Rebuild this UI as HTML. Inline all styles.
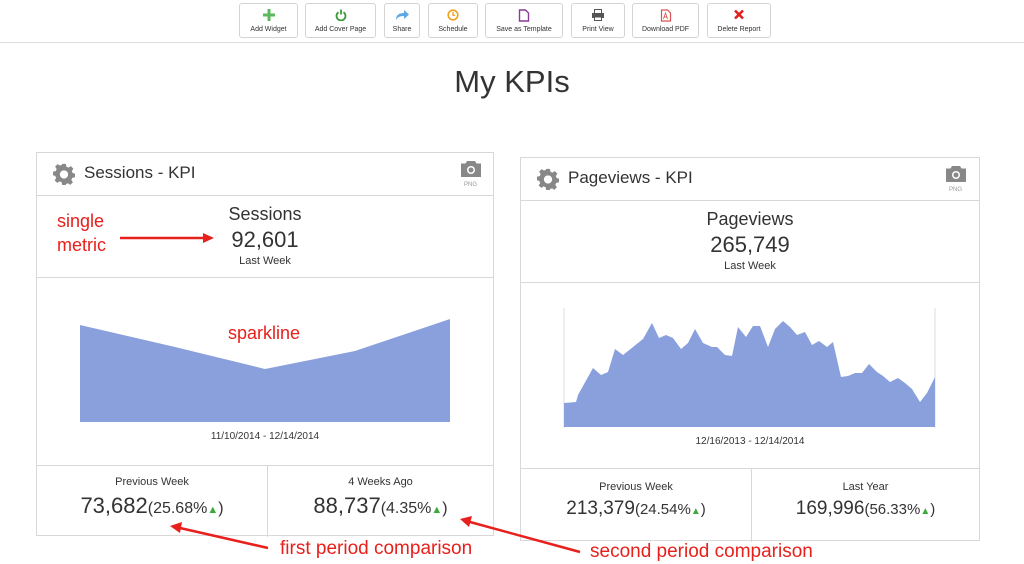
<!DOCTYPE html><html><head><meta charset="utf-8"><style>
*{margin:0;padding:0;box-sizing:border-box}
body{width:1024px;height:564px;background:#fff;font-family:"Liberation Sans",sans-serif;color:#333;position:relative;overflow:hidden}
.a{position:absolute}
.btn{position:absolute;top:3px;height:35px;border:1px solid #d4d4d4;border-radius:3px;background:#fff;font-size:7px;text-align:center;color:#333}
.btn span{position:absolute;left:0;right:0;top:22px}
.btn svg{position:absolute;left:50%;top:5px;transform:translateX(-50%)}
.card{position:absolute;border:1px solid #d8d8d8;background:#fff}
.hl{position:absolute;left:0;right:0;height:1px;background:#d8d8d8}
.c{text-align:center;position:absolute;left:0;right:0}
.red{color:#e8201c;font-size:18px}
</style></head><body>
<div class="a" style="left:0;right:0;top:42px;height:1px;background:#ddd"></div>
<div class="btn" style="left:239px;width:59px"><svg width="12" height="12" viewBox="0 0 12 12"><path d="M6 0v12M0 6h12" stroke="#5cb85c" stroke-width="3"/></svg><span>Add Widget</span></div>
<div class="btn" style="left:305px;width:71px"><svg width="12" height="12" viewBox="0 0 12 12"><path d="M3.5 3.2A4.5 4.5 0 1 0 8.5 3.2M6 0.5v5" stroke="#3a9a3a" stroke-width="1.8" fill="none"/></svg><span>Add Cover Page</span></div>
<div class="btn" style="left:384px;width:36px"><svg width="14" height="12" viewBox="0 0 14 12"><path d="M1 11C1 6 4 4 9 4V1l5 4.5-5 4.5V7C5 7 2.5 8 1 11z" fill="#5aa8e6"/></svg><span>Share</span></div>
<div class="btn" style="left:428px;width:50px"><svg width="12" height="12" viewBox="0 0 12 12"><circle cx="6" cy="6" r="4.8" stroke="#f0a020" stroke-width="1.6" fill="none"/><path d="M6 3v3.2h2" stroke="#f0a020" stroke-width="1.3" fill="none"/></svg><span>Schedule</span></div>
<div class="btn" style="left:485px;width:78px"><svg width="11" height="13" viewBox="0 0 11 13"><path d="M1 1h6l3 3v8H1z" stroke="#8a3a9a" stroke-width="1.4" fill="none"/></svg><span>Save as Template</span></div>
<div class="btn" style="left:571px;width:54px"><svg width="13" height="12" viewBox="0 0 13 12"><rect x="3" y="0.5" width="7" height="4" fill="none" stroke="#555"/><rect x="0.5" y="4" width="12" height="5" fill="#555"/><rect x="3" y="8" width="7" height="3.5" fill="#fff" stroke="#555"/></svg><span>Print View</span></div>
<div class="btn" style="left:632px;width:67px"><svg width="11" height="13" viewBox="0 0 11 13"><path d="M1 1h6l3 3v8H1z" stroke="#d9534f" stroke-width="1.2" fill="none"/><path d="M3 10l2-6 2 6M3 8h4" stroke="#d9534f" stroke-width=".8" fill="none"/></svg><span>Download PDF</span></div>
<div class="btn" style="left:707px;width:64px"><svg width="11" height="11" viewBox="0 0 11 11"><path d="M1.5 1.5l8 8M9.5 1.5l-8 8" stroke="#e02020" stroke-width="2.6"/></svg><span>Delete Report</span></div>

<div class="a" style="left:0;right:0;top:64px;text-align:center;font-size:31px;color:#333">My KPIs</div>

<!-- left card -->
<div class="card" style="left:36px;top:152px;width:458px;height:384px">
 <svg class="a" style="left:16px;top:10px" width="22" height="22" viewBox="0 0 24 24"><path fill="#888" d="M10 1h4l.6 3 2.2 1.1 2.6-1.7 2.8 2.8-1.7 2.6L21.6 11l2.4.6v4l-3 .6-1 2.2 1.7 2.6-2.8 2.8-2.6-1.7-2.2 1L14 24h-4l-.6-3-2.2-1-2.6 1.7-2.8-2.8 1.7-2.6L2.4 14 0 13.4v-4l3-.6 1-2.2-1.7-2.6 2.8-2.8 2.6 1.7 2.2-1.1zM12 8a4.5 4.5 0 1 0 0 9 4.5 4.5 0 1 0 0-9z"/></svg>
 <div class="a" style="left:47px;top:10px;font-size:17px;color:#333">Sessions - KPI</div>
 <svg class="a" style="left:424px;top:8px" width="20" height="16" viewBox="0 0 20 16"><path fill="#888" d="M6 0h8l1.5 2.5H20V16H0V2.5h4.5z"/><circle cx="10" cy="9" r="4" fill="#fff"/><circle cx="10" cy="9" r="2.5" fill="#888"/></svg>
 <div class="a" style="left:427px;top:29px;font-size:6px;color:#999">PNG</div>
 <div class="hl" style="top:42px"></div>
 <div class="c" style="top:51px;font-size:18px">Sessions</div>
 <div class="c" style="top:74px;font-size:22px">92,601</div>
 <div class="c" style="top:102px;font-size:11px">Last Week</div>
 <div class="hl" style="top:124px"></div>
 <div class="c" style="top:278px;font-size:10px">11/10/2014 - 12/14/2014</div>
 <div class="hl" style="top:312px"></div>
 <div class="a" style="left:230px;top:312px;width:1px;height:72px;background:#d8d8d8"></div>
 <div class="a" style="left:0;width:230px;top:323px;text-align:center;font-size:11px">Previous Week</div>
 <div class="a" style="left:0;width:230px;top:340px;text-align:center;font-size:22px">73,682<span style="font-size:16px">(25.68%<span style="color:#3aaa3a;font-size:11px">▲</span>)</span></div>
 <div class="a" style="left:230px;width:227px;top:323px;text-align:center;font-size:11px">4 Weeks Ago</div>
 <div class="a" style="left:230px;width:227px;top:340px;text-align:center;font-size:22px">88,737<span style="font-size:16px">(4.35%<span style="color:#3aaa3a;font-size:11px">▲</span>)</span></div>
</div>

<!-- right card -->
<div class="card" style="left:520px;top:157px;width:460px;height:384px">
 <svg class="a" style="left:16px;top:10px" width="22" height="22" viewBox="0 0 24 24"><path fill="#888" d="M10 1h4l.6 3 2.2 1.1 2.6-1.7 2.8 2.8-1.7 2.6L21.6 11l2.4.6v4l-3 .6-1 2.2 1.7 2.6-2.8 2.8-2.6-1.7-2.2 1L14 24h-4l-.6-3-2.2-1-2.6 1.7-2.8-2.8 1.7-2.6L2.4 14 0 13.4v-4l3-.6 1-2.2-1.7-2.6 2.8-2.8 2.6 1.7 2.2-1.1zM12 8a4.5 4.5 0 1 0 0 9 4.5 4.5 0 1 0 0-9z"/></svg>
 <div class="a" style="left:47px;top:10px;font-size:17px;color:#333">Pageviews - KPI</div>
 <svg class="a" style="left:425px;top:8px" width="20" height="16" viewBox="0 0 20 16"><path fill="#888" d="M6 0h8l1.5 2.5H20V16H0V2.5h4.5z"/><circle cx="10" cy="9" r="4" fill="#fff"/><circle cx="10" cy="9" r="2.5" fill="#888"/></svg>
 <div class="a" style="left:428px;top:29px;font-size:6px;color:#999">PNG</div>
 <div class="hl" style="top:42px"></div>
 <div class="c" style="top:51px;font-size:18px">Pageviews</div>
 <div class="c" style="top:74px;font-size:22px">265,749</div>
 <div class="c" style="top:102px;font-size:11px">Last Week</div>
 <div class="hl" style="top:124px"></div>
 <div class="c" style="top:278px;font-size:10px">12/16/2013 - 12/14/2014</div>
 <div class="hl" style="top:310px"></div>
 <div class="a" style="left:230px;top:310px;width:1px;height:74px;background:#d8d8d8"></div>
 <div class="a" style="left:0;width:230px;top:323px;text-align:center;font-size:11px">Previous Week</div>
 <div class="a" style="left:0;width:230px;top:340px;text-align:center;font-size:19px">213,379<span style="font-size:15px">(24.54%<span style="color:#3aaa3a;font-size:10px">▲</span>)</span></div>
 <div class="a" style="left:230px;width:229px;top:323px;text-align:center;font-size:11px">Last Year</div>
 <div class="a" style="left:230px;width:229px;top:340px;text-align:center;font-size:19px">169,996<span style="font-size:15px">(56.33%<span style="color:#3aaa3a;font-size:10px">▲</span>)</span></div>
</div>

<svg class="a" style="left:0;top:0" width="1024" height="564">
 <polygon fill="#8aa0dc" points="80,422 80,325 175,347 265,369 355,351 450,319 450,422"/>
 <line x1="564" y1="308" x2="564" y2="428" stroke="#ddd"/><line x1="935" y1="308" x2="935" y2="428" stroke="#ddd"/>
 <polygon fill="#8aa0dc" points="564,427 564,403 576,402 578,395 593,368 601,375 608,372 615,349 623,355 643,339 652,323 659,338 666,335 673,338 681,349 688,343 695,329 703,343 712,347 717,347 725,355 732,356 738,327 746,337 753,326 760,326 768,347 775,329 783,321 790,327 797,335 805,332 812,345 819,341 827,347 833,342 841,377 848,376 855,373 862,373 869,364 877,372 883,376 890,382 898,378 905,383 912,389 920,402 927,393 935,377 935,427"/>
 <g stroke="#e8201c" stroke-width="2.5" fill="#e8201c">
  <line x1="120" y1="238" x2="205" y2="238"/><polygon points="214,238 203,233 203,243" stroke="none"/>
  <line x1="268" y1="548" x2="180" y2="528"/><polygon points="170,526 182,522 180,533" stroke="none"/>
  <line x1="580" y1="552" x2="470" y2="522"/><polygon points="460,519 472,516 469,527" stroke="none"/>
 </g>
</svg>
<div class="a red" style="left:57px;top:211px">single</div>
<div class="a red" style="left:57px;top:235px">metric</div>
<div class="a red" style="left:228px;top:323px">sparkline</div>
<div class="a red" style="left:280px;top:538px;font-size:19px">first period comparison</div>
<div class="a red" style="left:590px;top:541px;font-size:19px">second period comparison</div>
</body></html>
